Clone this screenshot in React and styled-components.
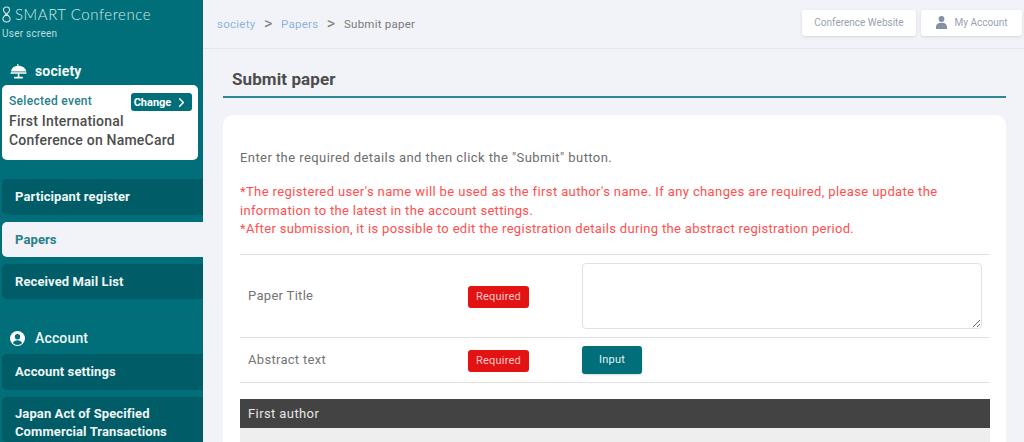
import React from 'react';
import styled, { createGlobalStyle } from 'styled-components';
import { ChevronRight } from 'lucide-react';

const Global = createGlobalStyle`
  html, body { margin: 0; padding: 0; height: 442px; overflow: hidden; }
  body {
    font-family: Roboto, "Noto Sans", sans-serif;
    background: #f1f3f9;
  }
  * { box-sizing: border-box; }
`;

const Layout = styled.div`
  display: flex;
  width: 1024px;
  height: 442px;
  overflow: hidden;
`;

const Sidebar = styled.aside`
  flex: 0 0 203px;
  background: #006f79;
  color: #fff;
  overflow: hidden;
`;

const Brand = styled.div`
  padding: 5px 0 0 2px;
  height: 48px;
  color: #d4e8ea;
`;

const BrandName = styled.div`
  display: flex;
  align-items: center;
  gap: 4px;
  font-size: 15px;
  line-height: 18px;
  font-weight: 300;
  letter-spacing: 0.55px;
  font-family: Lato, Roboto, sans-serif;
`;

const BrandSub = styled.div`
  font-size: 10px;
  line-height: 12px;
  margin-top: 5px;
  letter-spacing: 0.25px;
  color: #bcdcdf;
`;

const SectionHead = styled.div`
  display: flex;
  align-items: center;
  gap: ${p => p.$gap}px;
  height: 22px;
  padding-left: 10px;
  margin-top: ${p => p.$top}px;
  font-size: 14px;
  font-weight: ${p => p.$weight || 700};
  letter-spacing: 0.15px;
  color: #f2f8f8;
`;

const EventCard = styled.div`
  position: relative;
  margin: 3px 5px 0 2px;
  height: 75px;
  background: #fff;
  border-radius: 5px;
  padding: 9px 7px;
`;

const EventLabel = styled.div`
  font-size: 12px;
  line-height: 15px;
  font-weight: 500;
  letter-spacing: 0.3px;
  color: #28808a;
`;

const EventName = styled.div`
  font-size: 14px;
  line-height: 19px;
  margin-top: 3px;
  font-weight: 500;
  letter-spacing: 0.2px;
  color: #4d4d4d;
`;

const ChangeButton = styled.div`
  position: absolute;
  top: 8px;
  right: 6px;
  display: flex;
  align-items: center;
  justify-content: center;
  gap: 3px;
  width: 61px;
  height: 18px;
  border-radius: 3px;
  background: #006f79;
  color: #fff;
  font-size: 11px;
  font-weight: 700;
`;

const NavList = styled.nav`
  display: flex;
  flex-direction: column;
  gap: 7px;
  margin-top: ${p => p.$top}px;
  padding-left: 2px;
`;

const NavItem = styled.div`
  display: flex;
  align-items: center;
  min-height: 35px;
  padding: ${p => (p.$tall ? '8px' : '0')} 0 ${p => (p.$tall ? '2px' : '0')} 13px;
  border-radius: 5px 0 0 5px;
  font-size: 13px;
  line-height: 17.5px;
  font-weight: 700;
  letter-spacing: 0.1px;
  background: ${p => (p.$active ? '#f1f3f9' : '#005c66')};
  color: ${p => (p.$active ? '#28808a' : '#eef6f6')};

  &:first-child {
    min-height: 36px;
  }
`;

const Divider = styled.div`
  height: 1px;
  margin-top: 17px;
  background: #0a6872;
`;

const Main = styled.main`
  flex: 1;
  min-width: 0;
`;

const TopBar = styled.header`
  display: flex;
  align-items: center;
  justify-content: space-between;
  height: 49px;
  padding: 0 2px 1px 14px;
  border-bottom: 1px solid #e4e6ec;
`;

const Crumbs = styled.div`
  display: flex;
  align-items: center;
  font-size: 11.5px;
  letter-spacing: 0.25px;
  color: #7b7b7b;
`;

const CrumbLink = styled.span`
  color: #90b4d9;
`;

const CrumbSep = styled.span`
  margin: 0 8.5px;
  font-size: 16px;
  line-height: 16px;
  color: #808080;
`;

const TopActions = styled.div`
  display: flex;
  gap: 5px;
  margin-top: -2px;
`;

const TopButton = styled.div`
  display: flex;
  align-items: center;
  justify-content: center;
  gap: 8px;
  height: 26px;
  width: ${p => p.$width}px;
  background: #fff;
  border-radius: 3px;
  box-shadow: 0 1px 3px rgba(0, 0, 0, 0.12);
  font-size: 10px;
  color: #99a1b0;
`;

const Content = styled.div`
  padding: 19px 18px 0 20px;
`;

const PageTitle = styled.h1`
  margin: 0;
  height: 30px;
  padding-left: 9px;
  border-bottom: 2px solid #2b8791;
  font-size: 17px;
  line-height: 22px;
  font-weight: 700;
  letter-spacing: 0.1px;
  color: #4d4d4d;
`;

const Card = styled.section`
  margin-top: 17px;
  height: 400px;
  padding: 34px 16px 0 17px;
  background: #fff;
  border-radius: 10px;
`;

const Intro = styled.p`
  margin: 0;
  font-size: 13px;
  line-height: 18px;
  letter-spacing: 0.43px;
  color: #6d6d6d;
`;

const Notice = styled.div`
  margin: 16px 0 15px;
  font-size: 13px;
  line-height: 18.5px;
  color: #ff4f4f;
`;

const NoticeLine = styled.div`
  letter-spacing: ${p => p.$spacing}px;
`;

const FormRow = styled.div`
  display: grid;
  grid-template-columns: 220px 114px 1fr;
  align-items: center;
  height: ${p => p.$height}px;
  padding-left: 8px;
  border-top: 1px solid #e2e2e2;
  ${p => p.$last && 'border-bottom: 1px solid #e2e2e2;'}
`;

const RowLabel = styled.div`
  font-size: 13px;
  letter-spacing: 0.3px;
  color: #757575;
`;

const RequiredBadge = styled.span`
  display: flex;
  align-items: center;
  justify-content: center;
  width: 61px;
  height: 22px;
  margin-top: 2px;
  border-radius: 3px;
  background: #e31313;
  color: #ffc9c9;
  font-size: 11px;
  letter-spacing: 0.2px;
`;

const TitleInput = styled.textarea`
  display: block;
  width: 400px;
  height: 66px;
  border: 1px solid #e2e2e2;
  border-radius: 4px;
  background: #fff;
  outline: none;
`;

const InputButton = styled.div`
  display: flex;
  align-items: center;
  justify-content: center;
  width: 60px;
  height: 28px;
  border-radius: 3px;
  background: #006f79;
  color: #e4f1f2;
  font-size: 11px;
  letter-spacing: 0.2px;
  box-shadow: 0 1px 2px rgba(0, 0, 0, 0.15);
`;

const SubHead = styled.div`
  display: flex;
  align-items: center;
  height: 29px;
  margin-top: 16px;
  padding-left: 8px;
  background: #434343;
  color: #e6e6e6;
  font-size: 13px;
  letter-spacing: 0.4px;
`;

const SubBody = styled.div`
  height: 60px;
  background: #eeeeee;
`;

const LoopLogo = () => (
  <svg width="9" height="17" viewBox="0 0 9 17" fill="none" stroke="#d4e8ea" strokeWidth="1.1">
    <path d="M4.500 8.200C2.600 6.800 1.400 5.600 1.400 3.900 1.400 2.200 2.700 1 4.500 1s3.100 1.200 3.100 2.900c0 1.700-1.200 2.900-3.100 4.300-1.900 1.400-3.600 2.700-3.600 4.600C.9 14.600 2.500 16 4.500 16s3.600-1.400 3.600-3.200c0-1.900-1.700-3.200-3.600-4.600z" />
  </svg>
);

const PodiumIcon = () => (
  <svg width="17" height="16" viewBox="0 0 17 16" fill="#fff">
    <path d="M1 8.500C1.500 5 4.500 3 7.500 2.800L7 1.200 8 .8l.7 2c3.600.1 7 2.200 7.600 5.700z" />
    <rect x="0.500" y="9.300" width="16" height="1.400" rx=".5" />
    <rect x="7.800" y="10.500" width="1.500" height="3.500" />
    <rect x="4" y="13.800" width="9" height="1.600" rx=".7" />
  </svg>
);

const AccountIcon = () => (
  <svg width="15" height="15" viewBox="0 0 24 24">
    <circle cx="12" cy="12" r="12" fill="#fff" />
    <circle cx="12" cy="9.200" r="4.300" fill="#006f79" />
    <path d="M4.500 19.200c1.500-3.300 4.400-4.500 7.500-4.500s6 1.200 7.500 4.500C17.500 21.300 15 22.300 12 22.300s-5.500-1-7.500-3.100z" fill="#006f79" />
  </svg>
);

const UserIcon = () => (
  <svg width="11" height="13" viewBox="0 0 11 13" fill="#8590a6">
    <circle cx="5.500" cy="3" r="2.900" />
    <path d="M0 13v-2.300C0 8.300 2 6.800 5.500 6.800S11 8.300 11 10.700V13z" />
  </svg>
);

const App = () => (
  <>
    <Global />
    <Layout>
      <Sidebar>
        <Brand>
          <BrandName>
            <LoopLogo />
            SMART Conference
          </BrandName>
          <BrandSub>User screen</BrandSub>
        </Brand>
        <SectionHead $top={12} $gap={8}>
          <PodiumIcon />
          society
        </SectionHead>
        <EventCard>
          <EventLabel>Selected event</EventLabel>
          <EventName>
            First International
            <br />
            Conference on NameCard
          </EventName>
          <ChangeButton>
            Change
            <ChevronRight size={15} strokeWidth={2.5} />
          </ChangeButton>
        </EventCard>
        <NavList $top={19}>
          <NavItem>Participant register</NavItem>
          <NavItem $active>Papers</NavItem>
          <NavItem>Received Mail List</NavItem>
        </NavList>
        <Divider />
        <SectionHead $top={10} $gap={10} $weight={500}>
          <AccountIcon />
          Account
        </SectionHead>
        <NavList $top={5}>
          <NavItem>Account settings</NavItem>
          <NavItem $tall>
            Japan Act of Specified
            <br />
            Commercial Transactions
          </NavItem>
        </NavList>
      </Sidebar>
      <Main>
        <TopBar>
          <Crumbs>
            <CrumbLink>society</CrumbLink>
            <CrumbSep>&gt;</CrumbSep>
            <CrumbLink>Papers</CrumbLink>
            <CrumbSep>&gt;</CrumbSep>
            Submit paper
          </Crumbs>
          <TopActions>
            <TopButton $width={114}>Conference Website</TopButton>
            <TopButton $width={101}>
              <UserIcon />
              My Account
            </TopButton>
          </TopActions>
        </TopBar>
        <Content>
          <PageTitle>Submit paper</PageTitle>
          <Card>
            <Intro>Enter the required details and then click the "Submit" button.</Intro>
            <Notice>
              <NoticeLine $spacing={0.38}>
                *The registered user's name will be used as the first author's name. If any changes are required, please update the
              </NoticeLine>
              <NoticeLine $spacing={0.32}>information to the latest in the account settings.</NoticeLine>
              <NoticeLine $spacing={0.33}>
                *After submission, it is possible to edit the registration details during the abstract registration period.
              </NoticeLine>
            </Notice>
            <FormRow $height={83}>
              <RowLabel>Paper Title</RowLabel>
              <RequiredBadge>Required</RequiredBadge>
              <TitleInput />
            </FormRow>
            <FormRow $height={46} $last>
              <RowLabel>Abstract text</RowLabel>
              <RequiredBadge>Required</RequiredBadge>
              <InputButton>Input</InputButton>
            </FormRow>
            <SubHead>First author</SubHead>
            <SubBody />
          </Card>
        </Content>
      </Main>
    </Layout>
  </>
);

export default App;
